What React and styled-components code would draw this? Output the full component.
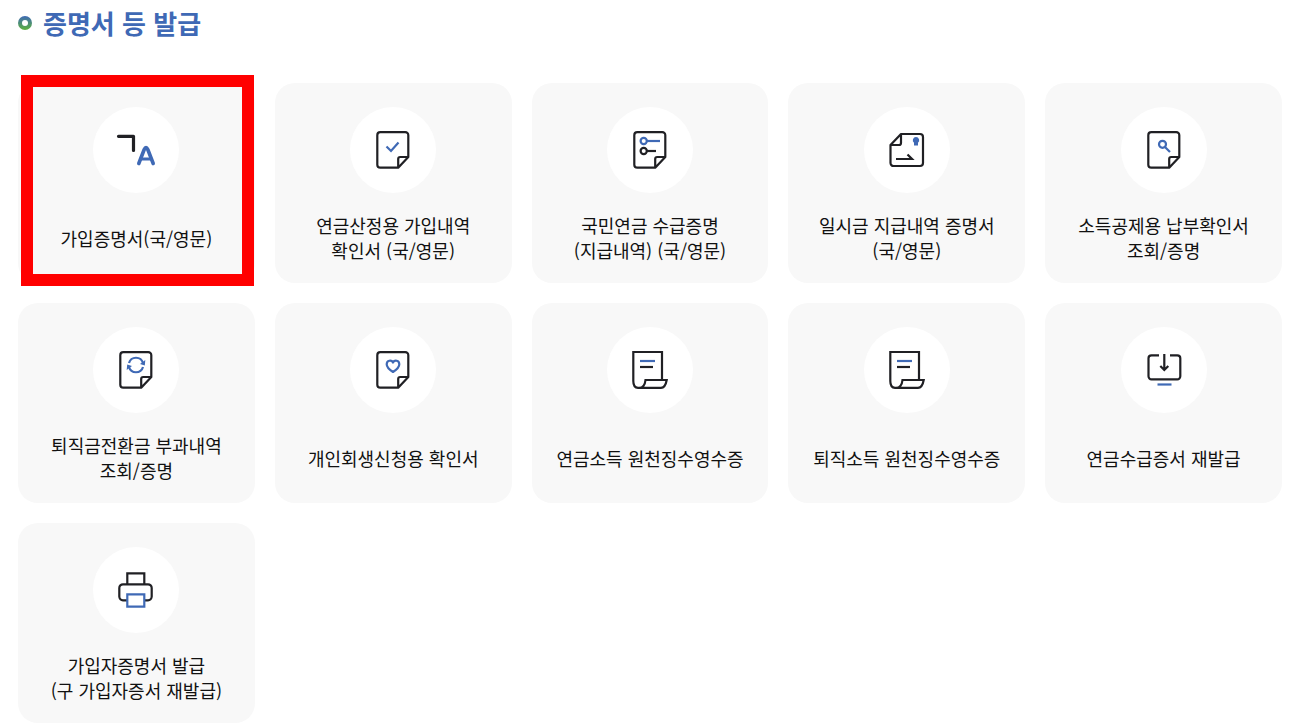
import React from "react";
import styled, { createGlobalStyle } from "styled-components";

const BLUE = "#3f69b5";
const INK = "#202024";

const GlobalStyle = createGlobalStyle`
  *, *::before, *::after { box-sizing: border-box; }
  body {
    margin: 0;
    background: #fff;
    color: #111;
    font-family: "Noto Sans CJK KR", "Noto Sans", sans-serif;
  }
`;

const Page = styled.main`
  padding: 4px 12px 3px 18px;
`;

const Title = styled.h2`
  display: flex;
  align-items: center;
  gap: 11px;
  margin: 0 0 42px;
  font-size: 26px;
  line-height: 37px;
  font-weight: 700;
  color: ${BLUE};
`;

const Bullet = styled.span`
  display: grid;
  place-items: center;
  width: 14px;
  height: 14px;
  border-radius: 50%;
  background: linear-gradient(#3f69b5, #5cb23c);

  &::after {
    content: "";
    width: 6px;
    height: 6px;
    border-radius: 50%;
    background: #fff;
  }
`;

const CardGrid = styled.ul`
  display: grid;
  grid-template-columns: repeat(5, minmax(0, 1fr));
  gap: 20px;
  margin: 0;
  padding: 0;
  list-style: none;
`;

const CardItem = styled.li`
  position: relative;
  display: flex;
`;

const Card = styled.a`
  flex: 1;
  display: flex;
  flex-direction: column;
  align-items: center;
  min-height: 200px;
  padding-top: 24px;
  border-radius: 20px;
  background: #f8f8f8;
  color: inherit;
  text-decoration: none;
`;

const IconCircle = styled.span`
  display: flex;
  width: 86px;
  height: 86px;
  border-radius: 50%;
  background: #fff;
`;

const Icon = styled.svg`
  width: 86px;
  height: 86px;
  fill: none;
  stroke: ${INK};
  stroke-width: 2.2;

  .blue { stroke: ${BLUE}; }
  .solid { fill: ${BLUE}; stroke: none; }
`;

const Label = styled.span`
  flex: 1;
  display: flex;
  align-items: center;
  font-size: 18px;
  line-height: 25px;
  text-align: center;
  white-space: pre-line;
`;

const Highlight = styled.span`
  position: absolute;
  inset: -8px 1px -3px 3px;
  border: 12px solid #f00;
  pointer-events: none;
`;

const Sheet = () => (
  <path
    strokeLinejoin="round"
    d="M48.200 60.700H30.300a3 3 0 0 1-3-3V28.200a3 3 0 0 1 3-3H55.300a3 3 0 0 1 3 3V50L48.200 60.700V52a2 2 0 0 1 2-2H58.300"
  />
);

const Scroll = () => (
  <>
    <path d="M55 53V25H26.300V54C26.300 58 28 60.800 31 60.800H54C57 60.800 59 57 59.700 53H38.500C38 58 35.500 60.800 32 60.800" />
    <path className="blue" d="M33 34H48" />
    <path d="M33 40H46" />
  </>
);

const drawings = {
  language: (
    <g strokeWidth="3.200" strokeLinecap="round" strokeLinejoin="round">
      <path d="M25.500 29.300H40.500V43.500" />
      <path className="blue" strokeWidth="3.600" d="M45.800 56.500L51.200 42.500Q53 38.500 54.800 42.500L60.200 56.500" />
      <path className="blue" strokeWidth="2.800" d="M48 52H58" />
    </g>
  ),
  check: (
    <>
      <Sheet />
      <path className="blue" d="M36.500 39.500L41 44L48.500 35.500" />
    </>
  ),
  list: (
    <>
      <Sheet />
      <circle className="blue" cx="36.700" cy="34" r="3.100" />
      <path className="blue" d="M40 34H53" />
      <circle cx="36.700" cy="44" r="3.100" />
      <path d="M40 44H49" />
    </>
  ),
  payout: (
    <>
      <path
        strokeLinejoin="round"
        d="M26.500 38L37 27H56a3 3 0 0 1 3 3V56a3 3 0 0 1-3 3H29.500a3 3 0 0 1-3-3ZH35a2 2 0 0 0 2-2V27"
      />
      <path d="M32 52H48L43.500 47.500" />
      <path className="solid" d="M52 30a3.200 3.200 0 0 1 2 5.700V38.500H50V35.700A3.200 3.200 0 0 1 52 30Z" />
    </>
  ),
  search: (
    <>
      <Sheet />
      <circle className="blue" cx="41.500" cy="37.300" r="3.500" />
      <path className="blue" d="M44 40L49 45" />
    </>
  ),
  refresh: (
    <>
      <Sheet />
      <path className="blue" d="M36 36A7.300 7.300 0 0 1 50 36M50 40A7.300 7.300 0 0 1 36 40" />
      <path className="solid" d="M52.300 33L51.800 38.500L47 37ZM33.700 43L34.200 37.500L39 39Z" />
    </>
  ),
  heart: (
    <>
      <Sheet />
      <path
        className="blue"
        strokeLinejoin="round"
        d="M43 45C39 42.500 36.700 40 36.700 37.300C36.700 33.200 41.500 32.500 43 35.500C44.500 32.500 49.300 33.200 49.300 37.300C49.300 40 47 42.500 43 45Z"
      />
    </>
  ),
  scroll: <Scroll />,
  download: (
    <>
      <path d="M38 28.300H30.500a3 3 0 0 0-3 3V49.300a3 3 0 0 0 3 3H56.300a3 3 0 0 0 3-3V31.300a3 3 0 0 0-3-3H49" />
      <path d="M43.300 27V42.500M39.300 39L43.300 43L47.300 39" />
      <path className="blue" d="M36.500 57.500H50.500" />
    </>
  ),
  print: (
    <>
      <path d="M34.300 37V26.300H51.300V37" />
      <path d="M34 53.300H30a3.700 3.700 0 0 1-3.700-3.700V41a3.700 3.700 0 0 1 3.700-3.700H55a3.700 3.700 0 0 1 3.700 3.700V49.600a3.700 3.700 0 0 1-3.700 3.700H52" />
      <path className="blue" d="M34.300 47.300H51.300V59.700H34.300Z" />
    </>
  ),
};

const certificates = [
  { icon: "language", label: "가입증명서(국/영문)", highlighted: true },
  { icon: "check", label: "연금산정용 가입내역\n확인서 (국/영문)" },
  { icon: "list", label: "국민연금 수급증명\n(지급내역) (국/영문)" },
  { icon: "payout", label: "일시금 지급내역 증명서\n(국/영문)" },
  { icon: "search", label: "소득공제용 납부확인서\n조회/증명" },
  { icon: "refresh", label: "퇴직금전환금 부과내역\n조회/증명" },
  { icon: "heart", label: "개인회생신청용 확인서" },
  { icon: "scroll", label: "연금소득 원천징수영수증" },
  { icon: "scroll", label: "퇴직소득 원천징수영수증" },
  { icon: "download", label: "연금수급증서 재발급" },
  { icon: "print", label: "가입자증명서 발급\n(구 가입자증서 재발급)" },
];

export default function App() {
  return (
    <Page lang="ko">
      <GlobalStyle />
      <Title>
        <Bullet aria-hidden="true" />
        증명서 등 발급
      </Title>
      <CardGrid>
        {certificates.map(({ icon, label, highlighted }) => (
          <CardItem key={label}>
            <Card href="#">
              <IconCircle>
                <Icon viewBox="0 0 86 86" aria-hidden="true">
                  {drawings[icon]}
                </Icon>
              </IconCircle>
              <Label>{label}</Label>
            </Card>
            {highlighted && <Highlight />}
          </CardItem>
        ))}
      </CardGrid>
    </Page>
  );
}
